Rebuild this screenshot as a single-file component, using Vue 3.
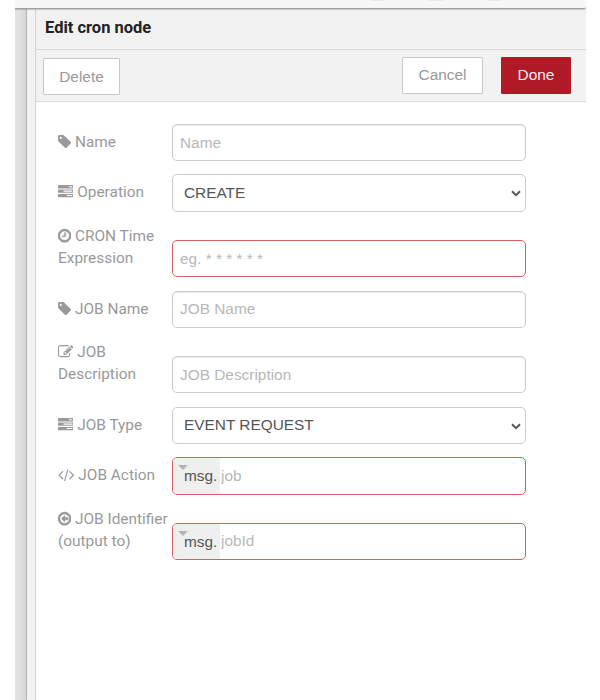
<script setup>
const ring = 'M1440 896q0-148-73-273t-198-198-273-73-273 73-198 198-73 273 73 273 198 198 273 73 273-73 198-198 73-273zm224 0q0 209-103 385.5t-279.5 279.5-385.5 103-385.5-103-279.5-279.5-103-385.5 103-385.5 279.5-279.5 385.5-103 385.5 103 279.5 279.5 103 385.5z'
const icons = {
  tag: { box: '128 0 1536 1792', size: 'narrow', d: 'M576 448q0-53-37.5-90.5t-90.5-37.5-90.5 37.5-37.5 90.5 37.5 90.5 90.5 37.5 90.5-37.5 37.5-90.5zm1067 576q0 53-37 90l-491 492q-39 37-91 37-53 0-90-37l-715-716q-38-37-64.5-101t-26.5-117v-416q0-52 38-90t90-38h416q53 0 117 26.5t102 64.5l715 714q37 39 37 91z' },
  tasks: { box: '0 0 1792 1792', size: 'regular', d: 'M1024 1408h640v-128h-640v128zm-384-512h1024v-128h-1024v128zm640-512h384v-128h-384v128zm512 832v256q0 26-19 45t-45 19h-1664q-26 0-45-19t-19-45v-256q0-26 19-45t45-19h1664q26 0 45 19t19 45zm0-512v256q0 26-19 45t-45 19h-1664q-26 0-45-19t-19-45v-256q0-26 19-45t45-19h1664q26 0 45 19t19 45zm0-512v256q0 26-19 45t-45 19h-1664q-26 0-45-19t-19-45v-256q0-26 19-45t45-19h1664q26 0 45 19t19 45z' },
  clock: { box: '128 0 1536 1792', size: 'narrow', bold: true, d: ring + 'M1024 544v448q0 14-9 23t-23 9h-320q-14 0-23-9t-9-23v-64q0-14 9-23t23-9h224v-352q0-14 9-23t23-9h64q14 0 23 9t9 23z' },
  edit: { box: '0 0 1792 1792', size: 'regular', d: 'M888 1184l116-116-152-152-116 116v56h96v96h56zm440-720q-16-16-33 1l-350 350q-17 17-1 33t33-1l350-350q17-17 1-33zm80 594v190q0 119-84.5 203.5t-203.5 84.5h-832q-119 0-203.5-84.5t-84.5-203.5v-832q0-119 84.5-203.5t203.5-84.5h832q63 0 117 25 15 7 18 23 3 17-9 29l-49 49q-14 14-32 8-23-6-45-6h-832q-66 0-113 47t-47 113v832q0 66 47 113t113 47h832q66 0 113-47t47-113v-126q0-13 9-22l64-64q15-15 35-7t20 29zm-96-738l288 288-672 672h-288v-288zm444 132l-92 92-288-288 92-92q28-28 68-28t68 28l152 152q28 28 28 68t-28 68z' },
  code: { box: '0 0 1920 1792', size: 'wide', d: 'M617 1399l-50 50q-10 10-23 10t-23-10l-466-466q-10-10-10-23t10-23l466-466q10-10 23-10t23 10l50 50q10 10 10 23t-10 23l-393 393 393 393q10 10 10 23t-10 23zm591-1067l-373 1291q-4 13-15.5 19.5t-23.5 2.5l-62-17q-13-4-19.5-15.5t-2.5-24.5l373-1291q4-13 15.5-19.5t23.5-2.5l62 17q13 4 19.5 15.5t2.5 24.5zm657 651l-466 466q-10 10-23 10t-23-10l-50-50q-10-10-10-23t10-23l393-393-393-393q-10-10-10-23t10-23l50-50q10-10 23-10t23 10l466 466q10 10 10 23t-10 23z' },
  back: { box: '128 0 1536 1792', size: 'narrow', bold: true, d: ring + 'M1312 800v192q0 13-9.5 22.5t-22.5 9.5h-352v192q0 14-9 23t-23 9q-12 0-24-10l-319-319q-9-9-9-23t9-23l320-320q9-9 23-9 13 0 22.5 9.5t9.5 22.5v192h352q13 0 22.5 9.5t9.5 22.5z' },
}

const fields = [
  { label: 'Name', icon: 'tag', kind: 'text', hint: 'Name' },
  { label: 'Operation', icon: 'tasks', kind: 'select', value: 'CREATE', roomy: true },
  { label: 'CRON Time Expression', icon: 'clock', kind: 'text', hint: 'eg. * * * * * *', invalid: true, tall: true },
  { label: 'JOB Name', icon: 'tag', kind: 'text', hint: 'JOB Name', raised: true },
  { label: 'JOB Description', icon: 'edit', kind: 'text', hint: 'JOB Description', tall: true },
  { label: 'JOB Type', icon: 'tasks', kind: 'select', value: 'EVENT REQUEST' },
  { label: 'JOB Action', icon: 'code', kind: 'typed', hint: 'job', invalid: true, roomy: true },
  { label: 'JOB Identifier (output to)', icon: 'back', kind: 'typed', hint: 'jobId', invalid: true, tall: true, raised: true },
]
</script>

<template>
  <div class="screen">
    <header class="topbar">
      <i class="smudge"></i><i class="smudge"></i><i class="smudge"></i>
    </header>
    <div class="body">
      <div class="shade"></div>
      <div class="gutter"></div>
      <section class="tray">
        <h1 class="title">Edit cron node</h1>
        <div class="toolbar">
          <button class="btn delete">Delete</button>
          <button class="btn cancel">Cancel</button>
          <button class="btn done">Done</button>
        </div>
        <form class="form">
          <div v-for="f in fields" :key="f.label" class="row" :class="{ tall: f.tall, roomy: f.roomy }">
            <label class="label">
              <svg class="icon" :class="[icons[f.icon].size, { bold: icons[f.icon].bold }]" :viewBox="icons[f.icon].box"><path :d="icons[f.icon].d" /></svg>
              {{ f.label }}
            </label>
            <div class="control" :class="[f.kind, { invalid: f.invalid, raised: f.raised }]">
              <template v-if="f.kind === 'select'">
                <select class="entry"><option>{{ f.value }}</option></select>
                <svg class="chevron" viewBox="0 0 10 7"><path d="M1 1.2 5 5.1 9 1.2" /></svg>
              </template>
              <template v-else>
                <span v-if="f.kind === 'typed'" class="type"><i class="caret"></i>msg.</span>
                <input class="entry" type="text" :placeholder="f.hint" />
              </template>
            </div>
          </div>
        </form>
      </section>
    </div>
  </div>
</template>

<style>
body { margin: 0; background: #fff; }
</style>

<style scoped>
.screen {
  box-sizing: border-box;
  width: 600px;
  height: 700px;
  padding: 0 14px 0 15px;
  display: flex;
  flex-direction: column;
  overflow: hidden;
  background: #fff;
  font-family: "Liberation Sans", Arial, sans-serif;
  font-size: 15.4px;
}
.topbar {
  position: relative;
  box-sizing: border-box;
  flex: 0 0 9px;
  display: flex;
  gap: 44px;
  padding-left: 356px;
  background: #f7f7f7;
  border-bottom: 1px solid #a0a0a0;
  border-bottom-right-radius: 2px;
  box-shadow: 0 1px 1px rgba(0, 0, 0, .18);
}
.smudge { width: 14px; height: 1px; background: #e9e9e9; border-radius: 0 0 7px 7px; }
.body { flex: 1; display: flex; min-height: 0; }
.shade {
  box-sizing: border-box;
  width: 12px;
  border-right: 1px solid #b5b5b5;
  background: linear-gradient(to right, #e2e2e2 30%, #d6d6d6);
}
.gutter { box-sizing: border-box; width: 9px; background: #f2f2f2; border-right: 1px solid #d2d2d2; }
.tray { flex: 1; background: #fff; }
.title {
  box-sizing: border-box;
  height: 41px;
  margin: 0;
  padding: 7px 0 0 9px;
  border-bottom: 1px solid #dadada;
  background: #f2f2f2;
  color: #222;
  font: bold 16.5px/24px Roboto, sans-serif;
}
.toolbar {
  box-sizing: border-box;
  height: 52px;
  display: flex;
  align-items: flex-start;
  padding: 7px 15px 0 7px;
  background: #f2f2f2;
  border-bottom: 1px solid #dadada;
}
.btn {
  box-sizing: border-box;
  height: 37px;
  padding: 0;
  border: 1px solid #c8c8c8;
  border-radius: 1px;
  background: #fff;
  color: #999;
  font: inherit;
}
.delete { width: 77px; margin-top: 1px; margin-right: auto; }
.cancel { width: 81px; margin-right: 18px; padding-bottom: 2px; }
.done { width: 70px; padding-bottom: 2px; border-color: #b01926; background: #b01926; color: #eee; }
.form { padding: 22px 0 0 22px; }
.row { display: flex; align-items: flex-end; height: 37px; margin-bottom: 13px; }
.roomy { height: 38px; }
.tall { height: 52px; margin-bottom: 14px; }
.label {
  box-sizing: border-box;
  width: 114px;
  height: 100%;
  padding: 7px 3px 0 0;
  color: #999;
  font: 15.4px/22px Roboto, sans-serif;
}
.tall .label { padding-top: 0; }
.icon { height: 15.4px; vertical-align: -2.2px; fill: #999; }
.bold { stroke: #999; stroke-width: 55; }
.narrow { width: 13.2px; }
.regular { width: 15.4px; }
.wide { width: 16.5px; }
.control {
  position: relative;
  box-sizing: border-box;
  display: flex;
  align-items: stretch;
  width: 354px;
  height: 37px;
  border: 1px solid #ccc;
  border-radius: 5px;
  background: #fff;
  overflow: hidden;
}
.roomy .control { height: 38px; }
.text:not(.invalid) { box-shadow: inset 0 1px 1px rgba(0, 0, 0, .08); }
.invalid { border-color: #d6615f; }
.entry {
  flex: 1;
  min-width: 0;
  padding: 0 7px;
  border: 0;
  outline: 0;
  background: transparent;
  color: #555;
  font: inherit;
}
.entry::placeholder { color: #b8b8b8; opacity: 1; }
.select .entry { appearance: none; padding: 0 11px 2px; }
.chevron {
  position: absolute;
  right: 4px;
  top: 15px;
  width: 10px;
  height: 7px;
  fill: none;
  stroke: #555;
  stroke-width: 2;
}
.type {
  position: relative;
  box-sizing: border-box;
  width: 47px;
  padding-left: 11px;
  background: #efefef;
  color: #555;
  line-height: 36px;
}
.caret {
  position: absolute;
  left: 5px;
  top: 7px;
  border: 5px solid transparent;
  border-top-color: #b5b5b5;
  border-bottom: 0;
}
.typed .entry { padding: 0 1px; }
.control.raised .entry { padding-bottom: 2px; }
</style>
